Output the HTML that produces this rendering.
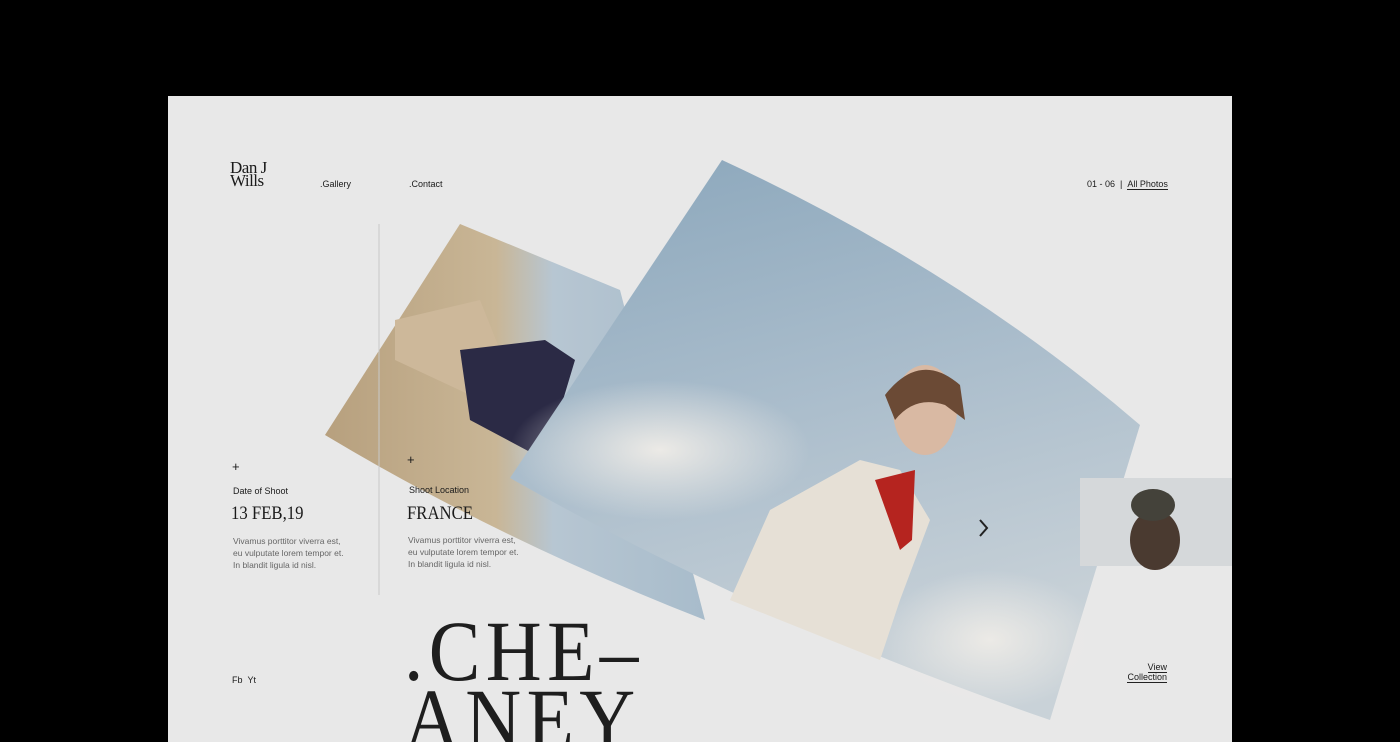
<!DOCTYPE html>
<html><head><style>
html,body{margin:0;width:1400px;height:742px;overflow:hidden}
body{background:#000;position:relative;font-family:"Liberation Sans",sans-serif;color:#1a1a1a}
.panel{position:absolute;left:168px;top:96px;width:1064px;height:646px;background:#e8e8e8;overflow:hidden}
.a{position:absolute;white-space:nowrap}
.s{font-size:9px}
.serif{font-family:"Liberation Serif",serif}
p.b{margin:0;font-size:8.5px;line-height:12px;color:#666}
</style></head><body>
<div class="panel"></div>
<svg class="a" style="left:0;top:0" width="1400" height="742">
<defs>
<linearGradient id="sky" x1="0" y1="0" x2="0.3" y2="1">
<stop offset="0" stop-color="#8aa6bb"/><stop offset="0.5" stop-color="#a9bccb"/><stop offset="1" stop-color="#c9d2d8"/></linearGradient>
<linearGradient id="sand" x1="0" y1="0" x2="1" y2="0">
<stop offset="0" stop-color="#b7a07e"/><stop offset="0.45" stop-color="#c9b696"/><stop offset="0.6" stop-color="#b7c6d2"/><stop offset="1" stop-color="#a8bccb"/></linearGradient>
<radialGradient id="cl" cx="0.5" cy="0.5" r="0.5"><stop offset="0" stop-color="#eceae6"/><stop offset="1" stop-color="#eceae6" stop-opacity="0"/></radialGradient>
</defs>
<path d="M460 224 L620 290 L705 620 Q500 540 325 435 Z" fill="url(#sand)"/>
<path d="M395 320 L480 300 L500 350 L470 395 L395 360 Z" fill="#cdb89a"/>
<path d="M460 350 L545 340 L575 360 L545 460 L470 420 Z" fill="#2b2a45"/>
<path d="M722 160 Q960 270 1140 425 L1050 720 Q760 620 510 478 Z" fill="url(#sky)"/>
<ellipse cx="660" cy="450" rx="150" ry="70" fill="url(#cl)"/>
<ellipse cx="990" cy="640" rx="110" ry="70" fill="url(#cl)"/>
<path d="M860 460 L900 470 L930 520 L900 600 L880 660 L780 620 L730 600 L770 510 Z" fill="#e6e0d6"/>
<ellipse cx="925" cy="410" rx="32" ry="45" fill="#d9b9a3"/>
<path d="M885 395 Q920 350 960 385 L965 420 L945 405 Q915 395 895 420 Z" fill="#6b4a35"/>
<path d="M875 480 L915 470 L912 540 L900 550 Z" fill="#b5241f"/>
<path d="M980 520 L987 528 L980 536" stroke="#222" stroke-width="2" fill="none"/>
<rect x="1080" y="478" width="152" height="88" fill="#d5d8da"/>
<ellipse cx="1155" cy="540" rx="25" ry="30" fill="#4a3a30"/>
<ellipse cx="1153" cy="505" rx="22" ry="16" fill="#44423a"/>
<line x1="379" y1="224" x2="379" y2="595" stroke="#c8c8c8"/>
</svg>
<div class="a serif" style="left:230px;top:161px;font-size:17px;line-height:13px;letter-spacing:-0.5px">Dan J<br>Wills</div>
<div class="a s" style="left:320px;top:179px">.Gallery</div>
<div class="a s" style="left:409px;top:179px">.Contact</div>
<div class="a s" style="left:1087px;top:179px">01 - 06 &nbsp;| &nbsp;<span style="border-bottom:1px solid #222">All Photos</span></div>
<div class="a" style="left:232px;top:459px;font-size:13px">+</div>
<div class="a" style="left:407px;top:452px;font-size:13px">+</div>
<div class="a s" style="left:233px;top:486px">Date of Shoot</div>
<div class="a s" style="left:409px;top:485px">Shoot Location</div>
<div class="a serif" style="left:231px;top:503px;font-size:19px;transform:scaleX(0.88);transform-origin:left">13 FEB,19</div>
<div class="a serif" style="left:407px;top:503px;font-size:19px;transform:scaleX(0.88);transform-origin:left">FRANCE</div>
<div class="a" style="left:233px;top:535px"><p class="b">Vivamus porttitor viverra est,<br>eu vulputate lorem tempor et.<br>In blandit ligula id nisl.</p></div>
<div class="a" style="left:408px;top:534px"><p class="b">Vivamus porttitor viverra est,<br>eu vulputate lorem tempor et.<br>In blandit ligula id nisl.</p></div>
<div class="a s" style="left:232px;top:675px">Fb &nbsp;Yt</div>
<div class="a s" style="left:1110px;top:662px;text-align:right;width:57px;line-height:10px"><span style="border-bottom:1px solid #222">View</span><br><span style="border-bottom:1px solid #222">Collection</span></div>
<div class="a serif" style="left:404px;top:617px;font-size:86px;line-height:68px;letter-spacing:6px;transform:scaleX(0.9);transform-origin:left top;color:#1e1e1e">.CHE–<br>ANEY</div>
</body></html>
